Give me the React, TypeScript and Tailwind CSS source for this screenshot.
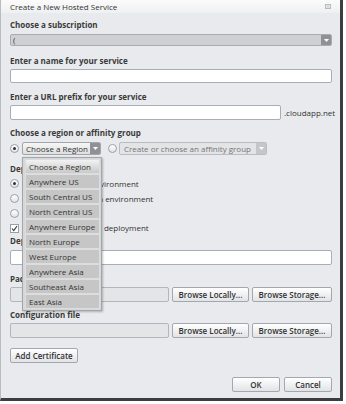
const font = { fontFamily: '"Open Sans", "DejaVu Sans", sans-serif' }

const Label = ({ children, className = '' }: { children: React.ReactNode; className?: string }) => (
  <div className={`h-[10px] leading-[10px] text-[8px] font-bold text-[#3a3a3a] whitespace-nowrap ${className}`}>{children}</div>
)

const Arrow = ({ light = false }: { light?: boolean }) => (
  <div className={`w-[10px] h-full flex items-center justify-center rounded-r-[1px] ${light ? 'bg-[#c4c6c9]' : 'bg-[#8e9297]'}`}>
    <svg width="5" height="3" viewBox="0 0 5 3">
      <path d="M0 0h5L2.5 3z" fill="#ffffff" />
    </svg>
  </div>
)

const Radio = ({ checked = false }: { checked?: boolean }) => (
  <div className="w-[9px] h-[9px] rounded-full border border-[#9aa0a6] bg-gradient-to-b from-white to-[#e2e4e6] flex items-center justify-center shrink-0">
    {checked && <div className="w-[3px] h-[3px] rounded-full bg-[#333]" />}
  </div>
)

const Btn = ({ children, className = '' }: { children: React.ReactNode; className?: string }) => (
  <div className={`h-[15px] flex items-center justify-center rounded-[2px] border border-[#a3a8ae] bg-gradient-to-b from-white to-[#e1e3e6] text-[8px] font-semibold text-[#333] whitespace-nowrap ${className}`}>
    {children}
  </div>
)

const regions = [
  'Choose a Region',
  'Anywhere US',
  'South Central US',
  'North Central US',
  'Anywhere Europe',
  'North Europe',
  'West Europe',
  'Anywhere Asia',
  'Southeast Asia',
  'East Asia',
]

export default function App() {
  return (
    <div className="w-[346px] h-[404px] bg-white relative" style={font}>
      <div className="w-[343px] h-[401px] bg-[#e8eaed] border-l border-[#b9bdc2] border-r-[3px] border-r-[#3b3d40] border-b-[3px] border-b-[#3b3d40] flex flex-col relative">
        {/* Title */}
        <div className="h-[13px] shrink-0 bg-gradient-to-b from-[#fbfbfb] to-[#eff0f2] flex items-center justify-between pl-[9px] pr-[9px]">
          <span className="text-[8px] leading-[10px] text-[#333]">Create a New Hosted Service</span>
          <svg width="6" height="5" viewBox="0 0 6 5">
            <rect x="0.5" y="0.5" width="5" height="4" fill="none" stroke="#b8bcc0" strokeWidth="1" />
            <path d="M1.5 1.5l3 2M4.5 1.5l-3 2" stroke="#b8bcc0" strokeWidth="0.8" />
          </svg>
        </div>

        <div className="flex flex-col pl-[9px] pr-[8px]">
          <Label className="mt-[7px]">Choose a subscription</Label>
          <div className="mt-[4px] h-[12px] flex border border-[#a9adb2] rounded-[2px] bg-[#cfd0d2]">
            <div className="flex-1 text-[8px] leading-[10px] text-[#333] pl-[2px]">(</div>
            <Arrow />
          </div>

          <Label className="mt-[10px]">Enter a name for your service</Label>
          <div className="mt-[3px] h-[14px] bg-white border border-[#a7aeb6] rounded-[2px]" />

          <Label className="mt-[9px]">Enter a URL prefix for your service</Label>
          <div className="mt-[3px] h-[15px] flex items-center gap-[3px]">
            <div className="flex-1 h-full bg-white border border-[#a7aeb6] rounded-[2px]" />
            <span className="text-[8px] text-[#333] w-[48px]">.cloudapp.net</span>
          </div>

          <Label className="mt-[8px]">Choose a region or affinity group</Label>
          <div className="mt-[4px] h-[13px] flex items-center">
            <Radio checked />
            <div className="ml-[3px] w-[79px] h-full flex border border-[#a2a6ab] rounded-[2px] bg-gradient-to-b from-[#f6f6f6] to-[#dedfe1]">
              <div className="flex-1 text-[8px] leading-[11px] text-[#333] pl-[3px] whitespace-nowrap overflow-hidden">Choose a Region</div>
              <Arrow />
            </div>
            <div className="ml-[7px]"><Radio /></div>
            <div className="ml-[2px] w-[148px] h-full flex border border-[#b9bdc1] rounded-[2px] bg-[#e3e4e6]">
              <div className="flex-1 text-[8px] leading-[11px] text-[#737578] pl-[4px] whitespace-nowrap overflow-hidden">Create or choose an affinity group</div>
              <Arrow light />
            </div>
          </div>

          <Label className="mt-[9px]">Deployment options</Label>
          <div className="mt-[2px] flex flex-col">
            {['Deploy to staging environment', 'Deploy to production environment', 'Do not deploy'].map((t, i) => (
              <div key={t} className="h-[15px] flex items-center gap-[5px]">
                <Radio checked={i === 0} />
                <span className="text-[8px] text-[#333] whitespace-nowrap">{t}</span>
              </div>
            ))}
            <div className="h-[14px] flex items-center gap-[5px]">
              <div className="w-[9px] h-[9px] border border-[#9aa0a6] bg-white flex items-center justify-center">
                <svg width="7" height="7" viewBox="0 0 7 7">
                  <path d="M1 3.5l1.8 2L6 1" fill="none" stroke="#333" strokeWidth="1.1" />
                </svg>
              </div>
              <span className="text-[8px] text-[#333] whitespace-nowrap">Start after successful deployment</span>
            </div>
          </div>

          <Label className="mt-[1px]">Deployment name</Label>
          <div className="mt-[4px] h-[15px] bg-white border border-[#a7aeb6] rounded-[2px]" />

          <Label className="mt-[9px]">Package location</Label>
          <div className="mt-[3px] h-[15px] flex gap-[3px]">
            <div className="flex-1 h-full bg-[#e4e5e7] border border-[#b3b7bb] rounded-[2px]" />
            <Btn className="w-[77px]">Browse Locally...</Btn>
            <Btn className="w-[80px]">Browse Storage...</Btn>
          </div>

          <Label className="mt-[8px]">Configuration file</Label>
          <div className="mt-[3px] h-[15px] flex gap-[3px]">
            <div className="flex-1 h-full bg-[#e4e5e7] border border-[#b3b7bb] rounded-[2px]" />
            <Btn className="w-[77px]">Browse Locally...</Btn>
            <Btn className="w-[80px]">Browse Storage...</Btn>
          </div>

          <div className="mt-[10px] flex">
            <Btn className="w-[68px] h-[14px]">Add Certificate</Btn>
          </div>

          <div className="mt-[14px] flex justify-end gap-[4px]">
            <Btn className="w-[48px]">OK</Btn>
            <Btn className="w-[48px]">Cancel</Btn>
          </div>
        </div>

        {/* Region dropdown list */}
        <div className="absolute left-[21px] top-[157px] w-[80px] bg-[#d6d7d8] border border-[#a4a7aa] shadow-[1px_1px_2px_rgba(0,0,0,0.25)] flex flex-col py-[1px] pl-[2px] pr-[1px]">
          {regions.map((r, i) => (
            <div
              key={r}
              className={`h-[15px] flex items-center pl-[3px] text-[8px] text-[#333] whitespace-nowrap border border-[#dcdddf] ${i === 0 ? 'bg-gradient-to-b from-[#f2f2f2] to-[#c9c9c9]' : 'bg-[#c6c6c6]'}`}
            >
              {r}
            </div>
          ))}
        </div>
      </div>
    </div>
  )
}
